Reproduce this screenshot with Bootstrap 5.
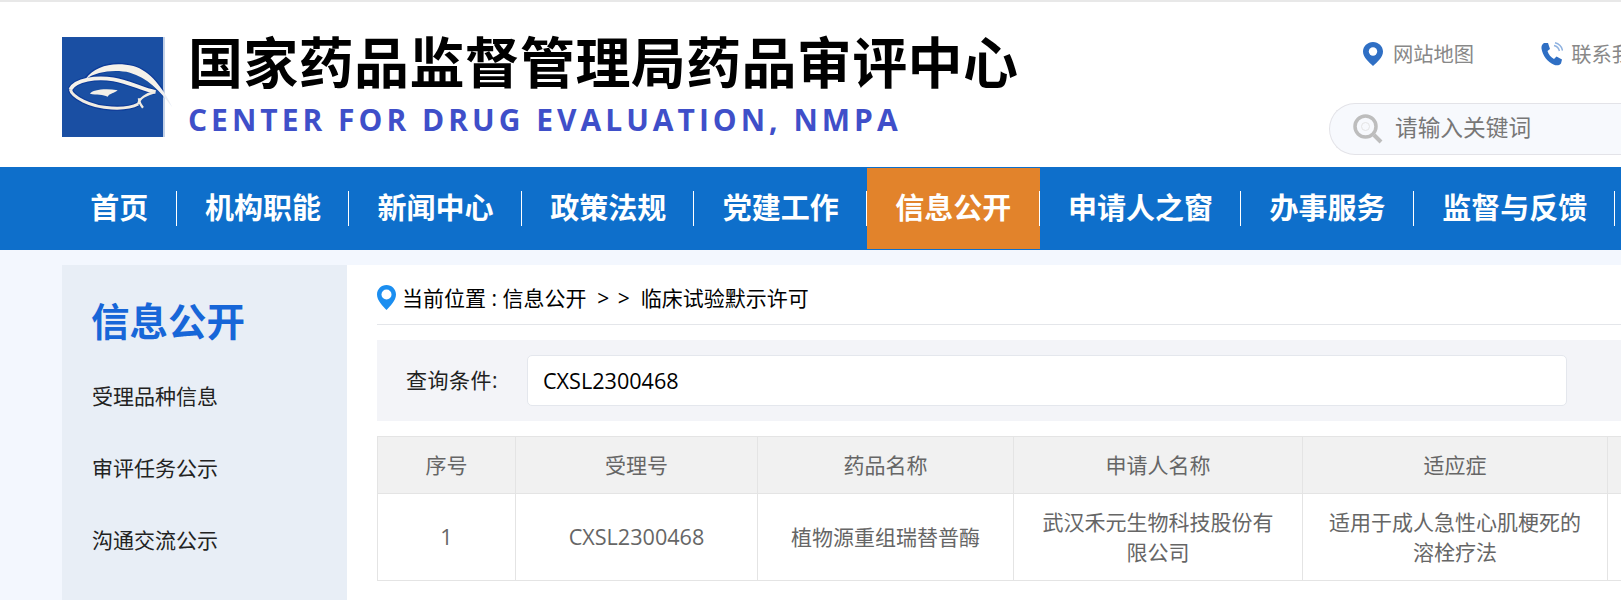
<!DOCTYPE html>
<html lang="zh-CN">
<head>
<meta charset="utf-8">
<title>国家药品监督管理局药品审评中心</title>
<link href="https://cdn.jsdelivr.net/npm/bootstrap@5.3.0/dist/css/bootstrap.min.css" rel="stylesheet">
<style>
html,body{height:600px;overflow:hidden;background:#f3f7fe;}
body{font-family:"Open Sans","Noto Sans CJK SC",sans-serif;}
.page-wrap{width:1800px;}
.site-head{height:167px;background:#fff;border-top:2px solid #e8e8e8;padding:35px 0 0 62px;}
.logo-art{width:113.3px;height:100px;flex:none;margin-right:12.7px;}
.brand-cn{font-family:"Noto Sans CJK SC",sans-serif;font-weight:700;font-size:55px;line-height:50px;height:50px;color:#000;white-space:nowrap;letter-spacing:.35px;margin-top:-3px;}
.brand-en{font-weight:700;font-size:30px;line-height:36px;letter-spacing:4px;color:#3f4fc9;margin-top:18px;white-space:nowrap;}
.head-right{width:471px;margin-top:4px;}
.head-links{padding-left:34px;height:24px;margin-top:1px;margin-bottom:37px;}
.head-link{font-size:20.3px;line-height:24px;color:#888;white-space:nowrap;}
.head-link svg{flex:none;margin-right:10px;}
.phone-link{margin-left:67px;}
.phone-link svg{margin-right:8px;}
.search-pill{height:52px;border:1px solid #e3e3e8;border-radius:26px 0 0 26px;border-right:0;background:#f7f9fd;padding:0 0 1px 23px;font-size:22.7px;color:#777;}
.search-pill svg{flex:none;margin-right:12px;}
.main-nav{height:83px;background:#0e6fcb;padding-left:62px;}
.nav-cell{padding:0 28.3px;font-family:"Noto Sans CJK SC",sans-serif;font-weight:700;font-size:29px;color:#fff;height:81px;white-space:nowrap;line-height:77px;}
.nav-sep{width:1px;height:35px;background:#fff;flex:none;margin-left:-1px;}
.nav-on{background:#e2832b;}
.body-row{padding:15px 0 0 62px;}
.side-col{width:285px;height:400px;background:#e8eef6;flex:none;padding:32px 0 0 30px;}
.side-title{font-family:"Noto Sans CJK SC",sans-serif;font-weight:700;font-size:38.5px;line-height:44px;color:#1766d8;margin:0 0 40px -1px;}
.side-item{font-size:21px;line-height:30px;color:#222;margin-bottom:42px;}
.main-col{flex:1;background:#fff;height:400px;padding:0 0 0 30px;}
.crumbs{height:60px;border-bottom:1px solid #e4e6ea;font-size:21px;color:#000;padding-top:8px;}
.crumbs svg{flex:none;margin-right:6px;margin-top:-2px;}
.gt-pair{word-spacing:3px;}
.filter-band{height:81px;margin-top:15px;background:#f3f4f8;padding-left:29px;font-size:21px;color:#222;width:1244px;}
.filter-band label{width:121px;flex:none;letter-spacing:.5px;}
.filter-band .form-control{width:1040px;height:51px;font-size:21.6px;color:#000;border-color:#e4e7ed;padding:0 15px;flex:none;border-radius:5px;background:#fff;}
.data-table{margin:15px 0 0;width:1400px;table-layout:fixed;border-color:#e4e4e4;font-size:21px;color:#666;}
.data-table th,.data-table td{text-align:center;vertical-align:middle;font-weight:400;color:#666;line-height:30px;padding:0 20px;}
.data-table th{background:#f1f1f1;height:57px;}
.data-table td{height:87px;background:#fff;}
.data-table .latin-val{font-size:21.6px;}
</style>
</head>
<body>
<div class="page-wrap">
  <header class="site-head d-flex">
    <svg class="logo-art" viewBox="21 21 340 300" aria-hidden="true">
      <defs>
        <filter id="soft" x="-15%" y="-15%" width="130%" height="130%"><feGaussianBlur stdDeviation="2"/></filter>
        <clipPath id="inbox"><rect x="21" y="21" width="304" height="300"/></clipPath>
        <linearGradient id="tailfade" x1="300" y1="0" x2="352" y2="0" gradientUnits="userSpaceOnUse"><stop offset="0" stop-color="#f6f2ea"/><stop offset="1" stop-color="#e6ecf6"/></linearGradient>
      </defs>
      <rect x="21" y="21" width="304" height="300" fill="#1a4fa3"/>
      <rect x="325" y="21" width="5" height="300" fill="#c4d2e8"/>
      <g clip-path="url(#inbox)"><g filter="url(#soft)">
        <path d="M88 150C115 108 175 92 235 108C285 122 325 175 352 232C315 180 275 135 225 124C175 114 125 125 88 150Z" fill="#0c3a98" stroke="#0c3a98" stroke-width="7"/>
        <path d="M46 178C62 148 125 140 175 148C225 156 260 178 302 186" fill="none" stroke="#0c3a98" stroke-width="18"/>
        <path d="M46 178C50 200 105 232 170 234C205 236 235 230 250 222" fill="none" stroke="#0c3a98" stroke-width="16"/>
      </g></g>
      <g filter="url(#soft)">
        <path d="M92 147C120 106 178 94 235 108C285 122 325 175 352 232C315 182 275 142 225 128C175 117 125 126 92 147Z" fill="url(#tailfade)"/>
        <path d="M46 178C62 148 125 140 175 148C225 156 260 178 302 186" fill="none" stroke="#f6f2ea" stroke-width="11"/>
        <path d="M46 178C50 200 105 232 170 234C205 236 235 230 250 222" fill="none" stroke="#f1ece2" stroke-width="9"/>
        <path d="M250 222C252 205 275 192 300 186M252 205C252 215 258 226 264 233" fill="none" stroke="#f1ece2" stroke-width="7"/>
        <path d="M105 191C112 180 150 174 188 181C178 190 164 190 158 200C145 192 125 196 105 191Z" fill="#f4f0e8"/>
      </g>
    </svg>
    <div>
      <div class="brand-cn">国家药品监督管理局药品审评中心</div>
      <div class="brand-en">CENTER FOR DRUG EVALUATION, NMPA</div>
    </div>
    <div class="head-right ms-auto">
      <div class="head-links d-flex">
        <div class="head-link d-flex align-items-center">
          <svg width="20" height="24" viewBox="0 0 20 24"><path d="M10 0C4.500 0 0 4.300 0 9.600C0 15.500 6 20.500 10 24C14 20.500 20 15.500 20 9.600C20 4.300 15.500 0 10 0Z" fill="#2f6fc4"/><circle cx="10" cy="9.500" r="4.200" fill="#fff"/></svg>网站地图
        </div>
        <div class="head-link d-flex align-items-center phone-link">
          <svg width="22" height="24" viewBox="0 0 22 24"><path d="M3 1L7 1L9 7L6.500 9C7.500 12.500 10 15.500 13 17L15.500 14.500L21 17.500L20 21.500C18.500 23.500 15.500 23.800 13 22.800C6.500 20 1.500 13.500 .5 6.500C.2 4.200 1.200 2.200 3 1Z" fill="#2f6fc4"/><path d="M13 3.500C15.800 4.200 17.800 6.200 18.400 9M14 .8C18 1.800 20.700 4.500 21.500 8.500" fill="none" stroke="#8fb2e0" stroke-width="1.400"/></svg>联系我们
        </div>
      </div>
      <div class="search-pill d-flex align-items-center">
        <svg width="30" height="30" viewBox="0 0 30 30"><circle cx="12.500" cy="12.500" r="10.500" fill="none" stroke="#bdbdbd" stroke-width="3.500"/><circle cx="12.500" cy="12.500" r="4" fill="none" stroke="#e4e4e4" stroke-width="1"/><path d="M21 21L28 28" stroke="#bdbdbd" stroke-width="4"/></svg>请输入关键词
      </div>
    </div>
  </header>

  <nav class="main-nav d-flex align-items-center">
    <div class="nav-cell">首页</div><span class="nav-sep"></span>
    <div class="nav-cell">机构职能</div><span class="nav-sep"></span>
    <div class="nav-cell">新闻中心</div><span class="nav-sep"></span>
    <div class="nav-cell">政策法规</div><span class="nav-sep"></span>
    <div class="nav-cell">党建工作</div><span class="nav-sep"></span>
    <div class="nav-cell nav-on">信息公开</div><span class="nav-sep"></span>
    <div class="nav-cell">申请人之窗</div><span class="nav-sep"></span>
    <div class="nav-cell">办事服务</div><span class="nav-sep"></span>
    <div class="nav-cell">监督与反馈</div><span class="nav-sep"></span>
  </nav>

  <div class="body-row d-flex">
    <aside class="side-col">
      <div class="side-title">信息公开</div>
      <div class="side-item">受理品种信息</div>
      <div class="side-item">审评任务公示</div>
      <div class="side-item">沟通交流公示</div>
    </aside>
    <main class="main-col">
      <div class="crumbs d-flex align-items-center">
        <svg width="19" height="25" viewBox="0 0 19 25"><path d="M9.500 0C4.200 0 0 4.200 0 9.400C0 15.500 5.800 21 9.500 25C13.200 21 19 15.500 19 9.400C19 4.200 14.800 0 9.500 0Z" fill="#1b8ef0"/><circle cx="9.500" cy="9.500" r="5" fill="#fff"/></svg>
        <span>当前位置 : 信息公开 &nbsp;<span class="gt-pair">&gt; &gt;</span>&nbsp; 临床试验默示许可</span>
      </div>
      <div class="filter-band d-flex align-items-center">
        <label>查询条件:</label>
        <input class="form-control" type="text" value="CXSL2300468">
      </div>
      <table class="table table-bordered data-table">
        <colgroup><col style="width:138px"><col style="width:242px"><col style="width:256px"><col style="width:289px"><col style="width:305px"><col></colgroup>
        <thead><tr><th>序号</th><th>受理号</th><th>药品名称</th><th>申请人名称</th><th>适应症</th><th></th></tr></thead>
        <tbody><tr><td class="latin-val">1</td><td class="latin-val">CXSL2300468</td><td>植物源重组瑞替普酶</td><td>武汉禾元生物科技股份有限公司</td><td>适用于成人急性心肌梗死的溶栓疗法</td><td></td></tr></tbody>
      </table>
    </main>
  </div>
</div>
</body>
</html>
